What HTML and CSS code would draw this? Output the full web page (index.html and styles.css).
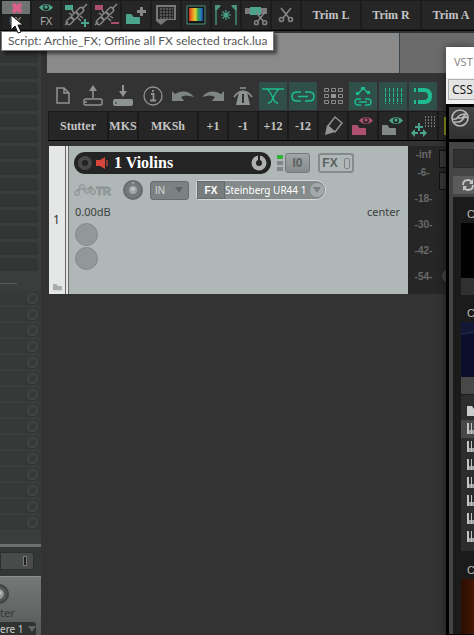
FILE: index.html
```html
<!DOCTYPE html>
<html lang="en">

<head>
    <meta charset="UTF-8">
    <meta name="viewport" content="width=device-width, initial-scale=1.0">
    <title>Arrange</title>
    <link rel="stylesheet" href="styles.css">
</head>

<body>
    <!-- Shared icons -->
    <svg class="defs" aria-hidden="true">
        <symbol id="chain" viewBox="0 0 28 28">
            <g fill="none" stroke="#858585" stroke-width="1.5">
                <rect x="-4" y="-2.5" width="8" height="5" rx="2.5" transform="translate(8 20) rotate(-45)" />
                <rect x="-4" y="-2.5" width="8" height="5" rx="2.5" transform="translate(13 15) rotate(-45)" />
                <rect x="-4" y="-2.5" width="8" height="5" rx="2.5" transform="translate(18 10) rotate(-45)" />
                <path d="M3 24l3-3M20 8l5-5M10 9l2 3M16 17l3 3M7 12l3 2M18 15l3 2" />
            </g>
        </symbol>
        <symbol id="folder" viewBox="0 0 14 11">
            <path d="M0 2q0-1 1-1h4q1 0 1.500 1.500T8 4h5q1 0 1 1v6H0z" fill="currentColor" />
        </symbol>
        <symbol id="eye" viewBox="0 0 14 9">
            <path d="M0 4.500Q3 1 7 1t7 3.500Q11 8 7 8T0 4.500z" fill="currentColor" />
            <circle cx="7" cy="4.500" r="3" fill="#242424" />
            <circle cx="7" cy="4" r="1.700" fill="currentColor" />
        </symbol>
        <symbol id="scissors" viewBox="0 0 16 16">
            <g fill="none" stroke="#858585" stroke-width="1.600">
                <path d="M3 1l8 10M13 1L5 11" />
                <circle cx="3.500" cy="12.500" r="2" />
                <circle cx="12.500" cy="12.500" r="2" />
            </g>
        </symbol>
        <symbol id="undo" viewBox="0 0 22 12">
            <path d="M0 1l3 3Q14-2 22 7q-9-3-13 0l3 4H0z" fill="currentColor" />
        </symbol>
        <symbol id="keys" viewBox="0 0 12 11">
            <path d="M0 0h2v7h2V0h1v7h2V0h1v7h2V0h2v11H0z" fill="#c4c4c4" />
            <path d="M3 7v4M6 7v4M9 7v4" stroke="#333" stroke-width=".5" />
        </symbol>
    </svg>

    <!-- Main toolbar -->
    <header class="top-bar">
        <button class="tool pressed" aria-label="Offline FX">
            <svg class="ico" viewBox="0 0 28 28">
                <path d="M0 13h28v15H0z" fill="#202322" />
                <path d="M11 3l8 8M19 3l-8 8" stroke="#db6085" stroke-width="4" />
                <text x="7" y="24" class="ico-text">FX</text>
            </svg>
        </button>
        <button class="tool" aria-label="Show FX">
            <svg class="ico" viewBox="0 0 28 28">
                <use href="#eye" x="7" y="2" width="14" height="9" color="#4ba58c" />
                <text x="8" y="24" class="ico-text">FX</text>
            </svg>
        </button>
        <button class="tool" aria-label="Add link">
            <svg class="ico" viewBox="0 0 28 28">
                <use href="#chain" width="28" height="28" />
                <path d="M3 4h8v5H3zM22 18h2v3h3v2h-3v3h-2v-3h-3v-2h3z" fill="#4ba58c" />
            </svg>
        </button>
        <button class="tool" aria-label="Remove link">
            <svg class="ico" viewBox="0 0 28 28">
                <use href="#chain" width="28" height="28" />
                <path d="M3 4h8v5H3zM19 21h8v2h-8z" fill="#aa506e" />
            </svg>
        </button>
        <button class="tool" aria-label="Add folder">
            <svg class="ico" viewBox="0 0 28 28">
                <use href="#folder" x="4" y="12" width="14" height="11" color="#4ba58c" />
                <path d="M18 6h3v3h3v3h-3v3h-3v-3h-3V9h3z" fill="#858585" />
            </svg>
        </button>
        <button class="tool" aria-label="Grid editor">
            <svg class="ico" viewBox="0 0 28 28">
                <path d="M4 4h20v15H15l-6 5-5-4z" fill="#777" />
                <path d="M6 6h16v12H6z" fill="#292929" />
                <path d="M8 8h13M8 11h13M8 14h13M8 17h13" stroke="#858585" stroke-dasharray="2 1" />
            </svg>
        </button>
        <button class="tool" aria-label="Colors">
            <svg class="ico" viewBox="0 0 28 28">
                <defs>
                    <linearGradient id="rainbow">
                        <stop offset="0" stop-color="#c83220" />
                        <stop offset=".25" stop-color="#ef8c22" />
                        <stop offset=".45" stop-color="#ded33a" />
                        <stop offset=".65" stop-color="#35a34f" />
                        <stop offset=".85" stop-color="#247fb8" />
                        <stop offset="1" stop-color="#243b91" />
                    </linearGradient>
                </defs>
                <path d="M5 5h18v18H5z" fill="#171717" stroke="#4b927f" />
                <path d="M7 7h14v13H7z" fill="url(#rainbow)" />
            </svg>
        </button>
        <button class="tool" aria-label="Item region">
            <svg class="ico" viewBox="0 0 28 28">
                <path d="M4 24V9l4-4M24 24V9l-4-4M14 9v10M9 14h10M10.500 10.500l7 7M17.500 10.500l-7 7" fill="none" stroke="#4ba58c" stroke-width="1.200" />
                <path d="M3 4h6L3 10zM25 4h-6l6 6z" fill="#4b8f7c" />
            </svg>
        </button>
        <button class="tool" aria-label="Cut items">
            <svg class="ico" viewBox="0 0 28 28">
                <path d="M3 7h7v6H3zM19 7h6v6h-6z" fill="#7b7b7b" />
                <path d="M8 6h11v8H8z" fill="#4ba58c" />
                <use href="#scissors" x="11" y="10" width="15" height="15" />
            </svg>
        </button>
        <button class="tool" aria-label="Cut">
            <svg class="ico" viewBox="0 0 28 28">
                <use href="#scissors" x="6" y="6" width="16" height="16" />
            </svg>
        </button>
        <button class="tool text wide">Trim L</button>
        <button class="tool text wide">Trim R</button>
        <button class="tool text wide">Trim A</button>
    </header>

    <main class="workspace">
        <!-- Mixer strip -->
        <aside class="mixer">
            <div class="inserts">
                <i></i><i></i><i></i><i></i><i></i><i></i><i></i>
                <i></i><i></i><i></i><i></i><i></i><i></i><i></i><i></i>
            </div>
            <div class="sends">
                <i></i><i></i><i></i><i></i><i></i><i></i><i></i><i></i>
                <i></i><i></i><i></i><i></i><i></i><i></i><i></i>
            </div>
            <div class="fx-slot"><button aria-label="Master FX"><span></span></button></div>
            <div class="master">
                <svg class="master-knob" viewBox="0 0 20 20">
                    <circle cx="10" cy="10" r="9" fill="#515554" stroke="#404443" stroke-width="2" />
                    <circle cx="10" cy="10" r="5" fill="#919594" />
                    <circle cx="11" cy="9" r="2" fill="#bbb" />
                </svg>
                <div class="master-pan">ter</div>
                <button class="hardware">ere 1 <b class="arrow"></b></button>
            </div>
        </aside>

        <section class="arrange">
            <div class="ruler"><div class="range"></div></div>

            <div class="icon-bar">
                <button class="tool" aria-label="New">
                    <svg class="ico" viewBox="0 0 28 28"><path d="M8 6h7l5 5v10H8zM15 6v5h5" fill="none" stroke="#929292" stroke-width="1.500" /></svg>
                </button>
                <button class="tool" aria-label="Open">
                    <svg class="ico" viewBox="0 0 28 28">
                        <rect x="5" y="17" width="18" height="6" rx="1.500" fill="none" stroke="#929292" stroke-width="1.500" />
                        <path d="M14 16V6M7 19v2" stroke="#929292" stroke-width="1.500" /><path d="M10 9l4-6 4 6z" fill="#929292" />
                    </svg>
                </button>
                <button class="tool" aria-label="Save">
                    <svg class="ico" viewBox="0 0 28 28">
                        <rect x="4" y="17" width="20" height="7" rx="2" fill="#8d9391" />
                        <path d="M14 3v8" stroke="#929292" stroke-width="2" /><path d="M10 9l4 6 4-6z" fill="#929292" /><path d="M7 20v2" stroke="#333" />
                    </svg>
                </button>
                <button class="tool" aria-label="Project info">
                    <svg class="ico" viewBox="0 0 28 28">
                        <circle cx="14" cy="14" r="9" fill="none" stroke="#929292" stroke-width="1.300" />
                        <path d="M12 12h2.500v6M11 18.500h6M14 8v2" fill="none" stroke="#929292" stroke-width="1.800" />
                    </svg>
                </button>
                <button class="tool" aria-label="Undo">
                    <svg class="ico muted" viewBox="0 0 28 28"><use href="#undo" x="3" y="8" width="22" height="12" /></svg>
                </button>
                <button class="tool" aria-label="Redo">
                    <svg class="ico muted" viewBox="0 0 28 28"><g transform="translate(28) scale(-1 1)"><use href="#undo" x="3" y="8" width="22" height="12" /></g></svg>
                </button>
                <button class="tool" aria-label="Metronome">
                    <svg class="ico" viewBox="0 0 28 28">
                        <path d="M10 10h8l3 13H7z" fill="#8d9391" />
                        <path d="M14 21V12" stroke="#333" stroke-width="2" />
                        <path d="M11 6h6M5 15q9-12 18 0" fill="none" stroke="#8d9391" stroke-width="1.600" />
                    </svg>
                </button>
                <button class="tool on" aria-label="Auto crossfade">
                    <svg class="ico" viewBox="0 0 28 28"><path d="M3 7h22M8 7q2 1 4 5l3 6q1 3 4 3M20 7q-2 1-4 5l-3 6q-1 3-4 3" fill="none" stroke="#1ebc91" stroke-width="1.300" /></svg>
                </button>
                <button class="tool on" aria-label="Item grouping">
                    <svg class="ico" viewBox="0 0 28 28"><path d="M12 10H8q-5 0-5 4.500T8 19h4M16 10h4q5 0 5 4.500T20 19h-4M9 14.500h10" fill="none" stroke="#1ebc91" stroke-width="1.600" /></svg>
                </button>
                <button class="tool" aria-label="Ripple edit">
                    <svg class="ico" viewBox="0 0 28 28">
                        <path d="M5.500 6.500h4v3h-4zM12.500 6.500h4v3h-4zM19.500 6.500h4v3h-4zM5.500 12.500h4v3h-4zM19.500 12.500h4v3h-4zM5.500 18.500h4v3h-4zM12.500 18.500h4v3h-4zM19.500 18.500h4v3h-4z" fill="none" stroke="#8b8b8b" />
                        <path d="M12 12h5v4h-5z" fill="#929292" />
                    </svg>
                </button>
                <button class="tool on" aria-label="Envelope link">
                    <svg class="ico" viewBox="0 0 28 28">
                        <path d="M9 12l5-6 5 5M12 17h-3q-3 0-3 3t3 3h3M16 17h3q3 0 3 3t-3 3h-3M10 20h8" fill="none" stroke="#1ebc91" stroke-width="1.400" />
                        <path d="M7 10h3v3H7zM12 5h4v3h-4zM18 9h3v3h-3z" fill="#1ebc91" />
                    </svg>
                </button>
                <button class="tool on" aria-label="Grid lines">
                    <svg class="ico" viewBox="0 0 28 28"><path d="M6.500 6v16M10.500 6v16M14.500 6v16M18.500 6v16M22.500 6v16" stroke="#1ebc91" stroke-dasharray="4 1" /></svg>
                </button>
                <button class="tool on" aria-label="Snapping">
                    <svg class="ico" viewBox="0 0 28 28">
                        <path d="M9 8h6q6 0 6 6t-6 6H9" fill="none" stroke="#1ebc91" stroke-width="4" />
                        <path d="M5 6h2v4H5zM5 18h2v4H5z" fill="#1ebc91" />
                    </svg>
                </button>
            </div>

            <div class="action-bar">
                <button class="tool text wide">Stutter</button>
                <button class="tool text">MKS</button>
                <button class="tool text wide">MKSh</button>
                <button class="tool text">+1</button>
                <button class="tool text">-1</button>
                <button class="tool text">+12</button>
                <button class="tool text">-12</button>
                <button class="tool" aria-label="Marker pen">
                    <svg class="ico" viewBox="0 0 28 28">
                        <path d="M16 5l7 6-7 9-7-6z" fill="none" stroke="#929292" stroke-width="1.500" />
                        <path d="M8 13l8 7-10 3z" fill="#929292" />
                    </svg>
                </button>
                <button class="tool" aria-label="Hide folder">
                    <svg class="ico" viewBox="0 0 28 28">
                        <use href="#folder" x="3" y="12" width="14" height="11" color="#ad506f" />
                        <use href="#eye" x="10" y="4" width="14" height="9" color="#ad506f" />
                    </svg>
                </button>
                <button class="tool" aria-label="Show folder">
                    <svg class="ico" viewBox="0 0 28 28">
                        <use href="#folder" x="3" y="12" width="14" height="11" color="#818886" />
                        <use href="#eye" x="10" y="4" width="14" height="9" color="#4ba58c" />
                    </svg>
                </button>
                <button class="tool" aria-label="Move to grid">
                    <svg class="ico" viewBox="0 0 28 28">
                        <path d="M16.500 4v11M19.500 4v11M22.500 4v11M25.500 4v11" stroke="#777" stroke-dasharray="2 1" />
                        <path d="M9 11h2v3h3v2h-3v3H9v-3H6v-2h3zM2 21l4-4v3h3v2H6v3zM18 21l-4-4v3h-3v2h3v3z" fill="#4ba58c" />
                    </svg>
                </button>
                <button class="tool yellow" aria-label="Highlight"></button>
            </div>

            <!-- Track -->
            <article class="track">
                <div class="track-number">
                    <span>1</span>
                    <svg class="tiny-folder" viewBox="0 0 14 11"><use href="#folder" width="14" height="11" /></svg>
                </div>
                <div class="track-panel">
                    <div class="track-head">
                        <div class="name-pill">
                            <button class="record" aria-label="Record arm"></button>
                            <svg class="speaker" viewBox="0 0 12 12"><path d="M0 3h4l5-3v12L4 9H0z" fill="#d6463c" /><path d="M11 3v6" stroke="#8d3933" stroke-width="2" /></svg>
                            <input class="name" type="text" value="1 Violins" aria-label="Track name">
                            <svg class="volume" viewBox="0 0 16 16"><circle cx="8" cy="8" r="7.500" fill="#aeb1b0" /><circle cx="8" cy="8" r="3" fill="#242424" /><path d="M8 8V0" stroke="#242424" stroke-width="2" /></svg>
                        </div>
                        <div class="leds"><i class="lit"></i><i></i><i></i></div>
                        <button class="io">I0</button>
                        <button class="fx">FX <span></span></button>
                    </div>
                    <div class="track-inputs">
                        <button class="automation" aria-label="Trim automation">
                            <svg class="trim" viewBox="0 0 38 14">
                                <path d="M2 10l5-6 5 4 5-4 3 5" fill="none" stroke="#8d9494" stroke-width="2" />
                                <g fill="#a8afaf" stroke="#8d9494"><circle cx="3" cy="10" r="2.500" /><circle cx="8" cy="4" r="2.500" /><circle cx="13" cy="8" r="2.500" /><circle cx="19" cy="9" r="2.500" /></g>
                                <text x="22" y="12" class="trim-text">TR</text>
                            </svg>
                        </button>
                        <svg class="pan" viewBox="0 0 20 20">
                            <circle cx="10" cy="10" r="9" fill="#747a7a" stroke="#666c6c" stroke-width="2" />
                            <circle cx="10" cy="10" r="4" fill="#a0a5a5" /><circle cx="10" cy="9" r="2" fill="#c0c4c4" /><circle cx="10" cy="3" r="1.500" fill="#999f9f" />
                        </svg>
                        <button class="in">IN <b class="arrow"></b></button>
                        <div class="input-group">
                            <button class="in-fx">FX</button>
                            <button class="source">Steinberg UR44 1 <span><b class="arrow"></b></span></button>
                        </div>
                    </div>
                    <div class="track-values"><span>0.00dB</span><span>center</span></div>
                    <button class="round" aria-label="Mute"></button>
                    <button class="round" aria-label="Solo"></button>
                </div>
                <div class="meter">
                    <span>-inf</span><span>-6-</span><span>-18-</span><span>-30-</span><span>-42-</span><span>-54-</span>
                </div>
                <div class="meter-buttons"><i></i><i></i><b></b></div>
            </article>
        </section>
    </main>

    <!-- Plugin window -->
    <section class="plugin">
        <div class="plugin-title">VST</div>
        <div class="plugin-preset"><button>CSS</button></div>
        <div class="plugin-body">
            <div class="plugin-logo">
                <svg class="logo" viewBox="0 0 18 18"><circle cx="9" cy="9" r="8" fill="none" stroke="#b5b5b5" stroke-width="1.600" /><path d="M2 10q3 1 5-2t8-3l-4 4H7M3 13h4q3 0 5-3t5-1" fill="none" stroke="#b5b5b5" stroke-width="1.600" /></svg>
            </div>
            <div class="plugin-frame">
                <div class="plugin-field"></div>
                <button class="refresh" aria-label="Refresh">
                    <svg class="refresh-icon" viewBox="0 0 14 14"><path d="M2 7q0-5 5-5 2 0 4 2M12 7q0 5-5 5-2 0-4-2" fill="none" stroke="#c5c5c5" stroke-width="1.800" /><path d="M12 1v5H8zM2 13V8h4z" fill="#c5c5c5" /></svg>
                </button>
                <div class="browser">
                    <h3>C</h3>
                    <div class="cover black"></div>
                    <div class="caption"></div>
                    <h3>C</h3>
                    <div class="cover blue"></div>
                    <div class="caption light"></div>
                    <ul>
                        <li><svg class="row-icon" viewBox="0 0 12 11"><path d="M0 1h5l2 3h5v7H0z" fill="#ccc" /></svg></li>
                        <li class="selected"><svg class="row-icon"><use href="#keys" width="12" height="11" /></svg></li>
                        <li><svg class="row-icon"><use href="#keys" width="12" height="11" /></svg></li>
                        <li><svg class="row-icon"><use href="#keys" width="12" height="11" /></svg></li>
                        <li><svg class="row-icon"><use href="#keys" width="12" height="11" /></svg></li>
                        <li><svg class="row-icon"><use href="#keys" width="12" height="11" /></svg></li>
                        <li><svg class="row-icon"><use href="#keys" width="12" height="11" /></svg></li>
                        <li><svg class="row-icon"><use href="#keys" width="12" height="11" /></svg></li>
                    </ul>
                    <h3>C</h3>
                    <div class="cover brown"></div>
                </div>
            </div>
        </div>
    </section>

    <div class="tooltip" role="tooltip">Script: Archie_FX; Offline all FX selected track.lua</div>
    <svg class="cursor" viewBox="0 0 13 20"><path d="M1 1v15l4-4 3 7 3-1-3-7h5z" fill="#fff" stroke="#111" /></svg>
</body>

</html>
```

FILE: styles.css
```css
*,
*::before,
*::after {
    box-sizing: border-box;
}

body {
    margin: 0;
    height: 100vh;
    display: flex;
    flex-direction: column;
    position: relative;
    overflow: hidden;
    background: #333;
    color: #ccc;
    font-family: "Noto Sans", sans-serif;
    font-size: 11px;
}

button {
    margin: 0;
    padding: 0;
    border: 0;
    background: none;
    color: inherit;
    font: inherit;
    white-space: nowrap;
}

svg {
    display: block;
    flex: none;
}

.defs {
    position: absolute;
    width: 0;
    height: 0;
}

/* Toolbars */

.top-bar,
.icon-bar,
.action-bar {
    display: flex;
    flex: none;
    gap: 2px;
    overflow: hidden;
}

.top-bar {
    height: 31px;
    padding: 1px 0 0 2px;
    background: #1c1c1c;
    border-bottom: 1px solid #000;
}

.tool {
    width: 28px;
    height: 28px;
    flex: none;
}

.top-bar .tool,
.action-bar .tool {
    background: #262626;
}

.top-bar .pressed {
    background: #6e7472;
}

.ico {
    width: 28px;
    height: 28px;
}

.ico-text {
    font: 11px "Noto Sans", sans-serif;
    fill: #aaa;
}

.muted {
    color: #7f8583;
}

.text {
    color: #c4c4c4;
    font: bold 12px "Liberation Serif", serif;
}

.wide {
    width: 58px;
}

/* Layout */

.workspace {
    flex: 1;
    min-height: 0;
    display: flex;
}

.mixer {
    width: 41px;
    flex: none;
    display: flex;
    flex-direction: column;
    overflow: hidden;
    background: #3b3d3c;
}

.inserts {
    padding: 3px 3px 0 0;
    height: 256px;
}

.inserts i {
    display: block;
    height: 13px;
    margin-bottom: 3px;
    background: #333534;
    border-radius: 0 3px 3px 0;
}

.inserts::after {
    content: "";
    display: block;
    width: 17px;
    margin-top: 12px;
    border-top: 1px solid #5a5c5b;
}

.sends {
    padding-top: 4px;
    flex: 1;
}

.sends i {
    display: flex;
    justify-content: flex-end;
    align-items: center;
    height: 16px;
    padding-right: 3px;
    background: #373938;
    border-bottom: 1px solid #3e403f;
}

.sends i::after {
    content: "";
    width: 11px;
    height: 11px;
    border: 2px solid #434544;
    border-radius: 50%;
}

.fx-slot {
    height: 32px;
    padding-top: 5px;
    background: #353736;
    border-top: 3px solid #6b6f6e;
}

.fx-slot button {
    display: flex;
    justify-content: flex-end;
    align-items: center;
    width: 34px;
    height: 18px;
    padding-right: 6px;
    background: #484b4a;
    border: 1px solid #2d2f2e;
    border-radius: 0 3px 3px 0;
}

.fx-slot span {
    width: 4px;
    height: 10px;
    border: 1px solid #777;
    background: #222;
}

.master {
    height: 59px;
    padding-top: 7px;
    background: linear-gradient(#747978, #555a59);
    border-top: 1px solid #8a8f8e;
    color: #353837;
}

.master-knob {
    width: 20px;
    height: 20px;
    margin-left: -11px;
}

.master-pan {
    line-height: 18px;
}

.hardware {
    display: flex;
    align-items: center;
    gap: 4px;
    width: 36px;
    height: 14px;
    background: #303332;
    border-radius: 0 3px 0 0;
    color: #ccc;
    font-size: 10px;
    line-height: 12px;
}

.arrow {
    display: inline-block;
    border: 4px solid transparent;
    border-top: 6px solid #5d6262;
    border-bottom: 0;
}

.arrange {
    flex: 1;
    min-width: 0;
    padding-left: 7px;
}

.ruler {
    height: 42px;
    margin-left: -1px;
    background: #6b6b6b;
    border-top: 2px solid #30353a;
    display: flex;
}

.range {
    width: 353px;
    background: #8a8a8a;
    border-right: 1px solid #3d454c;
}

.icon-bar {
    margin-top: 9px;
    padding-left: 1px;
}

.icon-bar .on {
    background: #2f4f48;
}

.action-bar {
    height: 30px;
    margin-top: 1px;
    padding: 1px 0 0 1px;
    background: #1a1a1a;
    border-bottom: 1px solid #000;
}

.action-bar .yellow {
    background: #8a9020;
    border: 5px solid #262626;
}

/* Track */

.track {
    display: flex;
    height: 148px;
    margin: 5px 0 0 1px;
    background: #262626;
}

.track-number {
    width: 20px;
    padding: 66px 3px 3px 4px;
    display: flex;
    flex-direction: column;
    justify-content: space-between;
    background: linear-gradient(90deg, #e4e7e6 16px, #666 16px 17px, #e4e7e6 17px 19px, #666 19px);
    color: #333;
    font-size: 12px;
    line-height: 16px;
}

.tiny-folder {
    width: 9px;
    height: 8px;
    color: #aaadad;
}

.track-panel {
    flex: 1;
    min-width: 0;
    padding: 6px 8px 0 5px;
    background: #b0b7b7;
}

.track-head {
    display: flex;
    align-items: center;
    height: 22px;
}

.name-pill {
    display: flex;
    align-items: center;
    width: 197px;
    height: 22px;
    padding: 0 4px;
    background: #242424;
    border-radius: 11px;
}

.record {
    width: 14px;
    height: 14px;
    border: 4px solid #484848;
    border-radius: 50%;
    background: #222;
}

.speaker {
    width: 12px;
    height: 12px;
    margin-left: 4px;
}

.name {
    flex: 1;
    min-width: 0;
    margin-left: 6px;
    padding: 0;
    border: 0;
    background: none;
    color: #fff;
    font: bold 16px "Liberation Serif", serif;
}

.volume {
    width: 16px;
    height: 16px;
}

.leds {
    display: flex;
    flex-direction: column;
    gap: 2px;
    width: 6px;
    margin: 0 2px 0 6px;
}

.leds i {
    height: 4px;
    background: #818787;
}

.leds .lit {
    background: #35b135;
}

.io,
.fx {
    height: 20px;
    border-radius: 3px;
    color: #5c6161;
    font: bold 12px "Liberation Sans", sans-serif;
}

.io {
    width: 25px;
    background: linear-gradient(#a0a5a5, #868b8b);
    border: 1px solid #747979;
}

.fx {
    display: flex;
    justify-content: center;
    align-items: center;
    gap: 6px;
    width: 36px;
    margin-left: 8px;
    border: 2px solid #858b8b;
}

.fx span {
    width: 6px;
    height: 11px;
    border: 1px solid #7f8585;
    border-radius: 2px;
}

.track-inputs {
    display: flex;
    align-items: center;
    height: 20px;
    margin-top: 6px;
}

.automation,
.trim {
    width: 38px;
    height: 14px;
}

.trim-text {
    font: bold 11px "Liberation Sans", sans-serif;
    fill: #9ca3a3;
    stroke: #8d9494;
    stroke-width: 1px;
}

.pan {
    width: 20px;
    height: 20px;
    margin-left: 11px;
}

.in {
    display: flex;
    justify-content: space-between;
    align-items: center;
    width: 39px;
    height: 19px;
    margin: 0 7px;
    padding: 0 5px 0 4px;
    background: #7c8282;
    border: 1px solid #676d6d;
    border-radius: 3px;
    color: #d5d8d8;
    font-family: "Liberation Sans", sans-serif;
    font-size: 10px;
}

.input-group {
    display: flex;
    width: 130px;
    height: 20px;
    border: 1px solid #d5d9d9;
    border-radius: 3px 10px 10px 3px;
    background: #858b8b;
    color: #fff;
}

.in-fx {
    width: 28px;
    background: #777d7d;
    border: 1px solid #656b6b;
    font-family: "Liberation Sans", sans-serif;
    font-weight: bold;
    font-size: 10px;
}

.source {
    flex: 1;
    min-width: 0;
    display: flex;
    justify-content: space-between;
    align-items: center;
    font-size: 10px;
}

.source span {
    display: flex;
    justify-content: center;
    align-items: center;
    width: 14px;
    height: 14px;
    margin-right: 1px;
    background: #a4aaaa;
    border-radius: 50%;
}

.source .arrow {
    border-top-color: #7a8080;
}

.track-values {
    display: flex;
    justify-content: space-between;
    margin: 4px 0 3px;
    padding-left: 1px;
    color: #3c4040;
    font-size: 11px;
    line-height: 16px;
}

.round {
    display: block;
    width: 23px;
    height: 23px;
    margin: 0 0 1px 1px;
    border: 1px solid #858b8b;
    border-radius: 50%;
    background: #929898;
}

.meter {
    width: 31px;
    padding-top: 1px;
    display: grid;
    grid-template-rows: 18px repeat(4, 26px) 16px;
    justify-items: center;
    color: #696969;
    font: bold 10px/16px "Liberation Sans", sans-serif;
}

.meter-buttons {
    width: 35px;
    padding-top: 4px;
}

.meter-buttons i {
    display: block;
    height: 18px;
    margin-bottom: 4px;
    background: #353535;
    border: 1px solid #111;
}

.meter-buttons b {
    display: block;
    width: 14px;
    height: 14px;
    margin: 79px 0 0 3px;
    background: #444;
    border-radius: 50%;
}

/* Floating plugin window */

.plugin {
    position: absolute;
    left: 446px;
    right: 0;
    top: 47px;
    bottom: 0;
    display: flex;
    flex-direction: column;
    overflow: hidden;
    background: #000;
    box-shadow: 0 0 8px rgba(0, 0, 0, 0.5);
}

.plugin-title {
    flex: none;
    height: 31px;
    padding-left: 8px;
    background: #fff;
    color: #888;
    font-size: 11px;
    line-height: 30px;
}

.plugin-preset {
    flex: none;
    height: 26px;
    padding: 1px 0 0 2px;
    background: #f0f0f0;
}

.plugin-preset button {
    width: 60px;
    height: 21px;
    padding-left: 3px;
    border: 1px solid #adadad;
    background: #e4e4e4;
    color: #222;
    font-size: 12px;
    line-height: 18px;
    text-align: left;
}

.plugin-body {
    flex: 1;
    min-height: 0;
    padding: 3px 0 0 3px;
}

.plugin-logo {
    height: 32px;
    padding: 2px;
    background: linear-gradient(#454545, #303030);
}

.logo {
    width: 18px;
    height: 18px;
}

.plugin-frame {
    margin-top: 3px;
    padding: 7px 0 0 4px;
    background: #454545;
}

.plugin-field {
    height: 19px;
    background: #303030;
    border: 1px solid #292929;
}

.refresh {
    display: block;
    width: 100%;
    height: 18px;
    margin: 8px 0 3px;
    padding-left: 8px;
    background: #5b5b5b;
}

.refresh-icon {
    width: 14px;
    height: 14px;
}

.browser {
    padding: 9px 0 0 8px;
    background: #1b1b1b;
}

.browser h3 {
    margin: 0;
    padding-left: 6px;
    color: #bbb;
    font: 11px/17px "Liberation Sans", sans-serif;
}

.cover {
    height: 55px;
}

.black {
    background: #000;
}

.blue {
    background: linear-gradient(170deg, #111735 20%, #25294a 21%, #0b0f2b 24%);
}

.brown {
    background: linear-gradient(90deg, #2b0d02, #431704);
}

.caption {
    height: 17px;
    margin-bottom: 10px;
    background: #303030;
}

.caption.light {
    height: 18px;
    margin: 0;
    border-bottom: 1px solid #1b1b1b;
    background: #484848;
}

.browser ul {
    margin: 0 0 11px;
    padding: 7px 0 5px;
    list-style: none;
    background: #2d2d2d;
}

.browser li {
    height: 18px;
    padding: 3px 0 0 6px;
}

.browser .selected {
    background: #484848;
}

.row-icon {
    width: 12px;
    height: 11px;
}

/* Tooltip and pointer */

.tooltip {
    position: absolute;
    left: 1px;
    top: 31px;
    padding: 0 6px;
    border: 1px solid #777;
    background: #fff;
    box-shadow: 3px 3px 3px rgba(0, 0, 0, 0.5);
    color: #575757;
    font: 12px/18px Lato, sans-serif;
    white-space: nowrap;
}

.cursor {
    position: absolute;
    left: 10px;
    top: 14px;
    width: 13px;
    height: 20px;
}
```
